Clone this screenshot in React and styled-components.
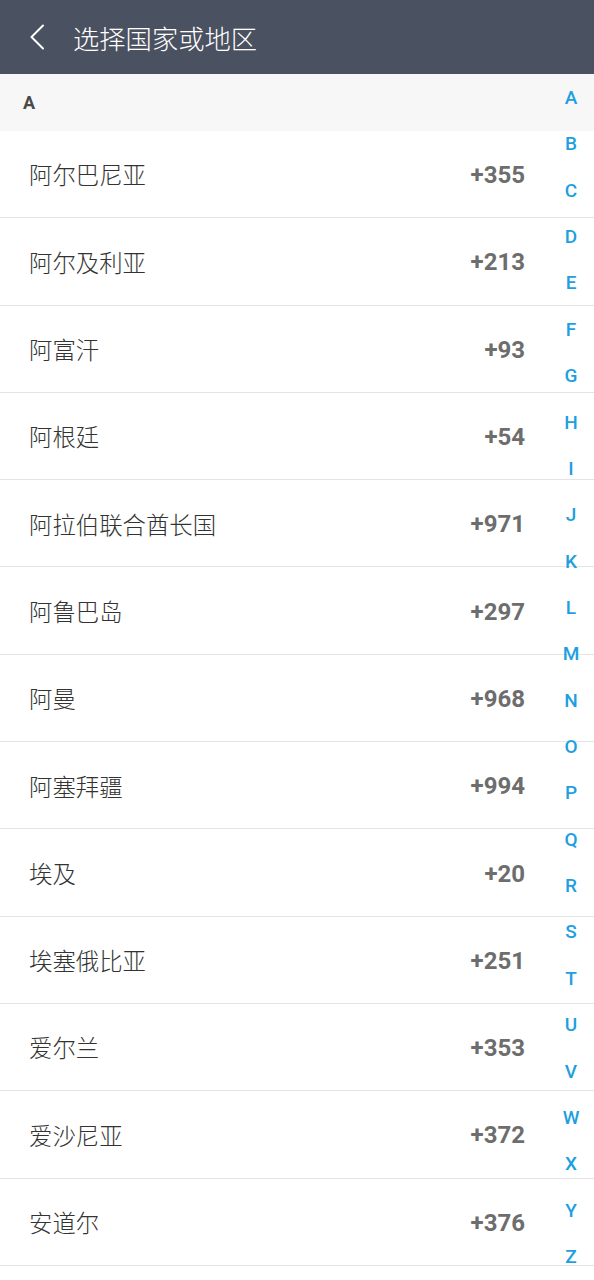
import styled, { createGlobalStyle } from "styled-components";

const GlobalStyle = createGlobalStyle`
  body {
    margin: 0;
    background: #ffffff;
    font-family: "Roboto", "Noto Sans CJK SC", sans-serif;
  }
`;

const Page = styled.div`
  position: relative;
  width: 594px;
  height: 1280px;
  overflow: hidden;
  background: #fff;
`;

const Header = styled.div`
  display: flex;
  align-items: center;
  height: 74px;
  background: #4a5160;
  padding-left: 28px;
  box-sizing: border-box;
`;

const BackButton = styled.div`
  width: 20px;
  height: 30px;
  display: flex;
  align-items: center;
  margin-right: 25px;
`;

const Title = styled.span`
  color: #fff;
  font-size: 26.3px;
  font-weight: 300;
  font-family: "Noto Sans CJK SC", sans-serif;
`;

const SectionHead = styled.div`
  height: 57px;
  display: flex;
  align-items: center;
  padding-left: 23px;
  background: #f7f7f7;
  color: #4a4a4a;
  font-size: 18px;
  font-weight: 700;
`;

const Row = styled.div`
  height: 87.3px;
  box-sizing: border-box;
  display: flex;
  align-items: center;
  justify-content: space-between;
  padding: 2px 69px 0 29px;
  border-bottom: 1px solid #e4e4e4;
`;

const Name = styled.span`
  font-family: "Noto Sans CJK SC", sans-serif;
  font-size: 23.4px;
  font-weight: 300;
  color: #333;
  line-height: 1;
`;

const Code = styled.span`
  font-size: 24px;
  font-weight: 700;
  color: #6d6d6d;
  line-height: 1;
`;

const IndexBar = styled.div`
  position: absolute;
  top: 74px;
  right: 0;
  width: 46px;
  display: flex;
  flex-direction: column;
  align-items: center;
  padding-top: 12px;
`;

const IndexLetter = styled.span`
  height: 46.36px;
  font-size: 19px;
  font-weight: 500;
  color: #1e9fe0;
  line-height: 24px;
`;

const countries = [
  ["阿尔巴尼亚", "+355"],
  ["阿尔及利亚", "+213"],
  ["阿富汗", "+93"],
  ["阿根廷", "+54"],
  ["阿拉伯联合酋长国", "+971"],
  ["阿鲁巴岛", "+297"],
  ["阿曼", "+968"],
  ["阿塞拜疆", "+994"],
  ["埃及", "+20"],
  ["埃塞俄比亚", "+251"],
  ["爱尔兰", "+353"],
  ["爱沙尼亚", "+372"],
  ["安道尔", "+376"],
];

const letters = "ABCDEFGHIJKLMNOPQRSTUVWXYZ".split("");

const App = () => {
  return (
    <Page>
      <GlobalStyle />
      <Header>
        <BackButton>
          <svg width="20" height="30" viewBox="0 0 20 30" fill="none">
            <path d="M15 3.5 L3.5 15 L15 26.5" stroke="#fff" strokeWidth="2" strokeLinecap="round" strokeLinejoin="round" />
          </svg>
        </BackButton>
        <Title>选择国家或地区</Title>
      </Header>
      <SectionHead>A</SectionHead>
      {countries.map(([name, code]) => (
        <Row key={name}>
          <Name>{name}</Name>
          <Code>{code}</Code>
        </Row>
      ))}
      <IndexBar>
        {letters.map((l) => (
          <IndexLetter key={l}>{l}</IndexLetter>
        ))}
      </IndexBar>
    </Page>
  );
};

export default App;
